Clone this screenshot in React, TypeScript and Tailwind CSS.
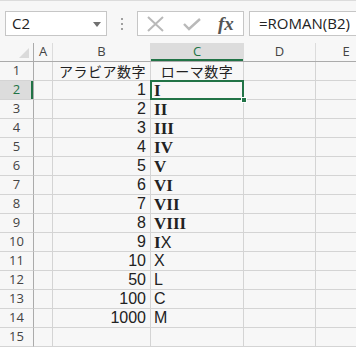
import type { ReactNode } from 'react'

const rows: [string, number | null, string][] = [
  ['1', null, ''],
  ['2', 1, 'I'],
  ['3', 2, 'II'],
  ['4', 3, 'III'],
  ['5', 4, 'IV'],
  ['6', 5, 'V'],
  ['7', 6, 'VI'],
  ['8', 7, 'VII'],
  ['9', 8, 'VIII'],
  ['10', 9, 'IX'],
  ['11', 10, 'X'],
  ['12', 50, 'L'],
  ['13', 100, 'C'],
  ['14', 1000, 'M'],
  ['15', null, ''],
]

const jp = { fontFamily: '"Noto Sans CJK JP", sans-serif' }
const ui = { fontFamily: '"Open Sans", "Noto Sans", sans-serif' }
const num = { fontFamily: '"Liberation Sans", Arial, sans-serif' }

function Roman({ text }: { text: string }) {
  return (
    <span className="flex items-baseline">
      {text.split('').map((ch, i) =>
        ch === 'I' || ch === 'V' ? (
          <span key={i} className="text-[17px] font-semibold leading-none" style={{ fontFamily: '"Liberation Serif", serif' }}>
            {ch}
          </span>
        ) : (
          <span key={i} className="text-[16px] leading-none" style={num}>
            {ch}
          </span>
        ),
      )}
    </span>
  )
}

function Cell({ w, children, className = '' }: { w: string; children?: ReactNode; className?: string }) {
  return (
    <div className={`relative h-[19px] shrink-0 border-r border-b border-[#d4d4d4] ${w} ${className}`}>
      {children}
    </div>
  )
}

export default function App() {
  return (
    <div className="h-[347px] w-[356px] overflow-hidden bg-[#f7f7f7] text-[#222]">
      {/* formula bar */}
      <div className="flex h-[43px] items-start border-t border-[#dcdcdc] pt-[10px]">
        <div className="ml-[5px] flex h-[25px] w-[102px] items-center justify-between border border-[#c6c6c6] bg-white pl-[6px] pr-[5px]">
          <span className="text-[15px]" style={ui}>C2</span>
          <span className="mt-[1px] h-0 w-0 border-x-[4px] border-t-[5px] border-x-transparent border-t-[#707070]" />
        </div>
        <div className="ml-[14px] flex h-[25px] flex-col justify-center gap-[3px]">
          <span className="h-[2px] w-[2px] bg-[#a0a0a0]" />
          <span className="h-[2px] w-[2px] bg-[#a0a0a0]" />
          <span className="h-[2px] w-[2px] bg-[#a0a0a0]" />
        </div>
        <div className="ml-[14px] flex h-[25px] w-[107px] items-center border border-[#c6c6c6] bg-white">
          <svg width="20" height="16" viewBox="0 0 20 16" className="ml-[8px]">
            <path d="M2 1 L17 15 M17 1 L2 15" stroke="#b9b9b9" strokeWidth="2" fill="none" />
          </svg>
          <svg width="20" height="14" viewBox="0 0 20 14" className="ml-[16px]">
            <path d="M2 7 L7 12 L18 2" stroke="#b9b9b9" strokeWidth="2.4" fill="none" />
          </svg>
          <span className="ml-[16px] text-[19px] font-bold italic leading-none text-[#555]" style={{ fontFamily: '"Liberation Serif", serif' }}>
            fx
          </span>
        </div>
        <div className="ml-[5px] flex h-[25px] flex-1 items-center border border-r-0 border-[#c6c6c6] bg-white pl-[9px]">
          <span className="text-[15px]" style={ui}>=ROMAN(B2)</span>
        </div>
      </div>

      {/* column headers */}
      <div className="flex h-[19px] border-b border-[#ababab] text-[13px] text-[#444]" style={ui}>
        <div className="relative h-full w-[34px] shrink-0 border-r border-[#ababab]">
          <svg width="10" height="10" viewBox="0 0 10 10" className="absolute bottom-[3px] right-[4px]">
            <path d="M10 0 L10 10 L0 10 Z" fill="#dadada" />
          </svg>
        </div>
        <div className="flex w-[19px] shrink-0 items-center justify-center border-r border-[#dcdcdc]">A</div>
        <div className="flex w-[98px] shrink-0 items-center justify-center border-r border-[#dcdcdc]">B</div>
        <div className="flex w-[93px] shrink-0 items-center justify-center border-r border-[#dcdcdc] bg-[#dcdcdc] text-[#217346] shadow-[inset_0_-2px_0_#217346]">C</div>
        <div className="flex w-[72px] shrink-0 items-center justify-center border-r border-[#dcdcdc]">D</div>
        <div className="flex w-[60px] shrink-0 items-center justify-center">E</div>
      </div>

      {/* rows */}
      {rows.map(([r, n, roman]) => {
        const sel = r === '2'
        return (
          <div key={r} className="flex">
            <div
              className={`flex h-[19px] w-[34px] shrink-0 items-center justify-center border-r border-b border-r-[#ababab] border-b-[#d4d4d4] text-[13px] ${sel ? 'bg-[#dcdcdc] text-[#217346] shadow-[inset_-2px_0_0_#217346]' : 'text-[#444]'}`}
              style={ui}
            >
              {r}
            </div>
            <Cell w="w-[19px]" />
            <Cell w="w-[98px]" className="flex items-center justify-end pr-[4px]">
              {r === '1' ? (
                <span className="text-[14px] tracking-[0.5px]" style={jp}>アラビア数字</span>
              ) : n !== null ? (
                <span className="text-[16px]" style={num}>{n}</span>
              ) : null}
            </Cell>
            <Cell w="w-[93px]" className={r === '1' ? 'flex items-center justify-center' : 'flex items-center pl-[3px]'}>
              {r === '1' ? <span className="text-[14px] tracking-[0.5px]" style={jp}>ローマ数字</span> : roman ? <Roman text={roman} /> : null}
              {sel && (
                <>
                  <span className="absolute -top-[1px] -left-[1px] -right-[1px] -bottom-[1px] z-10 border-2 border-[#217346]" />
                  <span className="absolute -right-[4px] -bottom-[4px] z-20 h-[6px] w-[6px] border border-white bg-[#217346]" />
                </>
              )}
            </Cell>
            <Cell w="w-[72px]" />
            <Cell w="w-[60px]" />
          </div>
        )
      })}
    </div>
  )
}
